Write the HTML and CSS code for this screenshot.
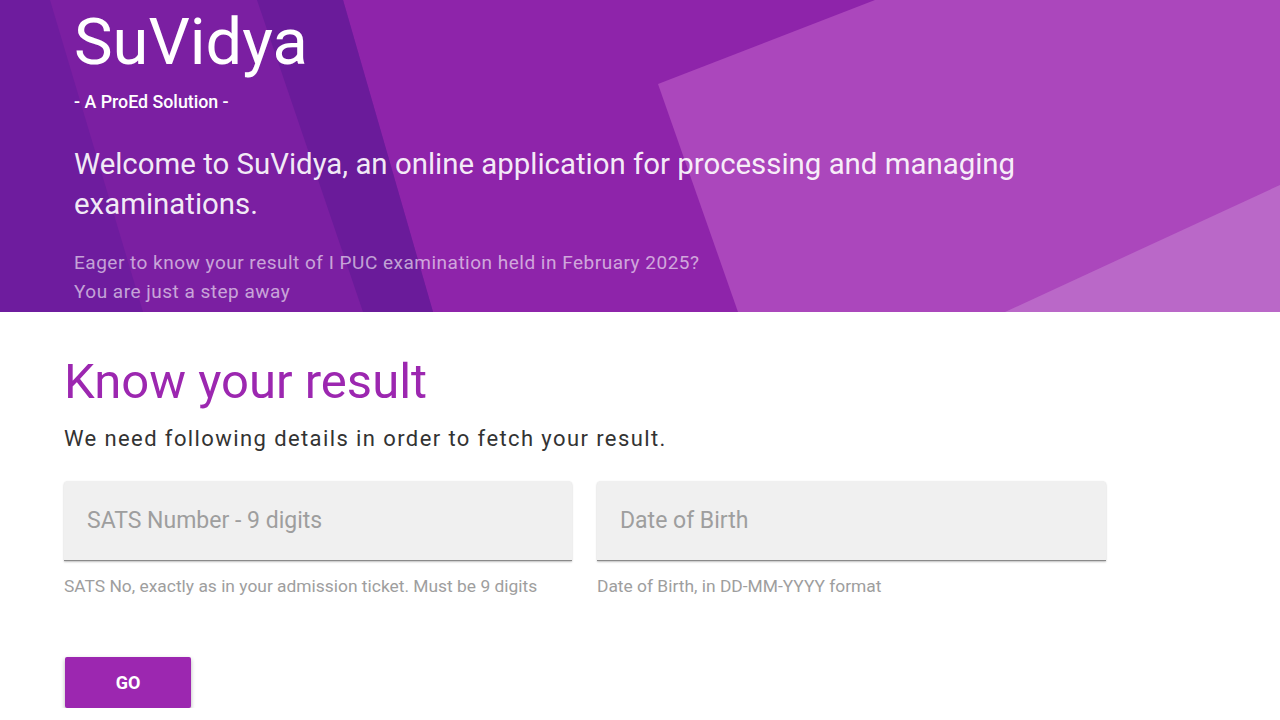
FILE: index.html
```html
<!DOCTYPE html>
<html>
	<head>
		<meta http-equiv="Content-Type" content="text/html; charset=utf-8">
		<title>SuVidya - Know your result</title>
		<link rel="stylesheet" href="styles.css">
	</head>
	<body>
		<header class="banner">
			<!-- material polygon backdrop -->
			<svg class="banner-bg" viewBox="0 0 1280 312" preserveAspectRatio="none">
				<rect width="1280" height="312" fill="#8e24aa"/>
				<polygon points="0,0 343,0 433,312 0,312" fill="#7b1fa2"/>
				<polygon points="257,0 343,0 433,312 363,312" fill="#6a1b9a"/>
				<polygon points="0,0 50,0 143,312 0,312" fill="#6e1c9e"/>
				<polygon points="658,84 875,0 1280,0 1280,312 738,312" fill="#ab47bc"/>
				<polygon points="1005,312 1280,185 1280,312" fill="#ba68c8"/>
			</svg>
			<div class="banner-inner">
				<h1 class="brand">SuVidya</h1>
				<p class="tagline">- A ProEd Solution -</p>
				<p class="welcome">Welcome to SuVidya, an online application for processing and managing examinations.</p>
				<p class="teaser">Eager to know your result of I PUC examination held in February 2025?<br>You are just a step away</p>
			</div>
		</header>

		<main class="result">
			<h2 class="result-title">Know your result</h2>
			<p class="lead">We need following details in order to fetch your result.</p>
			<form class="fields" onsubmit="return false;">
				<div class="field">
					<input type="text" placeholder="SATS Number - 9 digits">
					<span class="hint">SATS No, exactly as in your admission ticket. Must be 9 digits</span>
				</div>
				<div class="field">
					<input type="text" placeholder="Date of Birth">
					<span class="hint">Date of Birth, in DD-MM-YYYY format</span>
				</div>
			</form>
			<button class="go" type="button">GO</button>
		</main>
	</body>
</html>
```

FILE: styles.css
```css
body {
	margin: 0;
	padding: 0;
	font-family: Roboto, "Liberation Sans", sans-serif;
	background: #fff;
	overflow: hidden;
}

p {
	margin: 0;
}

/* top banner */
.banner {
	position: relative;
	height: 312px;
	overflow: hidden;
	color: #fff;
}

.banner-bg {
	position: absolute;
	top: 0;
	left: 0;
	width: 100%;
	height: 100%;
}

.banner-inner {
	position: relative;
	padding: 10px 0 0 74px;
}

.brand {
	margin: 0;
	font-size: 65px;
	font-weight: 400;
	line-height: 65px;
}

.tagline {
	margin-top: 15px;
	font-size: 17.8px;
	font-weight: 500;
	line-height: 24px;
}

.welcome {
	margin-top: 30px;
	max-width: 1000px;
	font-size: 29.4px;
	line-height: 40px;
	color: rgba(255, 255, 255, 0.92);
}

.teaser {
	margin-top: 24px;
	font-size: 19px;
	line-height: 29px;
	letter-spacing: 0.5px;
	color: rgba(255, 255, 255, 0.6);
}

/* result form */
.result {
	padding: 42px 0 0 64px;
}

.result-title {
	margin: 0;
	font-size: 49px;
	font-weight: 400;
	line-height: 56px;
	color: #9c27b0;
}

.lead {
	margin-top: 15px;
	font-size: 22px;
	line-height: 28px;
	letter-spacing: 1.4px;
	color: #333;
}

.fields {
	display: grid;
	grid-template-columns: 508px 509px;
	gap: 25px;
	margin: 28px 0 0 0;
}

.field input {
	display: block;
	width: 100%;
	height: 80px;
	box-sizing: border-box;
	padding: 0 23px;
	border: none;
	border-bottom: 1px solid #8a8a8a;
	border-radius: 4px 4px 0 0;
	background: #f0f0f0;
	box-shadow: 0 1px 2px rgba(0, 0, 0, 0.25);
	font-family: inherit;
	font-size: 23px;
	color: #333;
	outline: none;
}

.field input::placeholder {
	color: #9e9e9e;
}

.hint {
	display: block;
	margin-top: 15px;
	font-size: 17.4px;
	line-height: 20px;
	color: #9e9e9e;
}

.go {
	display: block;
	margin: 61px 0 0 1px;
	width: 126px;
	height: 51px;
	border: none;
	border-radius: 2px;
	background: #9c27b0;
	box-shadow: 0 2px 4px rgba(0, 0, 0, 0.3);
	color: #fff;
	font-family: inherit;
	font-size: 18px;
	font-weight: 700;
}
```
